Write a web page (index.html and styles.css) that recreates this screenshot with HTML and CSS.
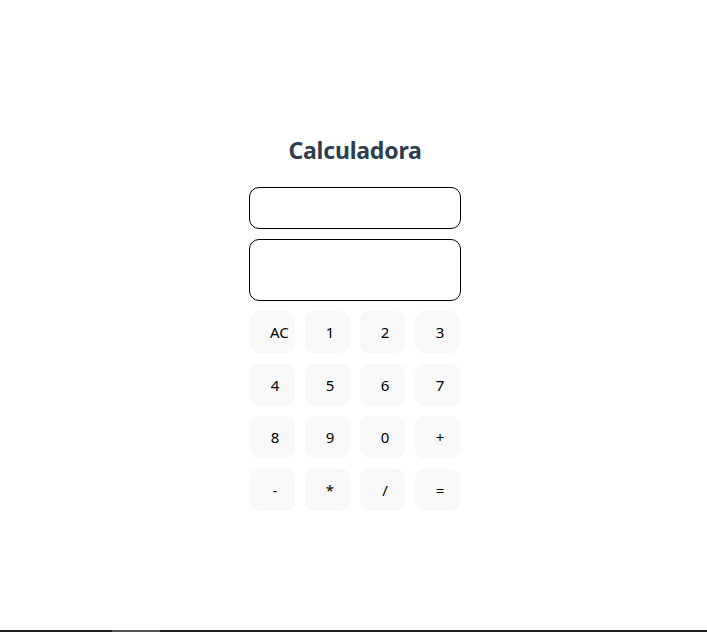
FILE: index.html
```html
<!DOCTYPE html>
<html lang="es">
<head>
<meta charset="utf-8">
<title>Calculadora</title>
<link rel="stylesheet" href="styles.css">
</head>
<body>
<div class="app">
  <h2 class="title">Calculadora</h2>
  <div class="calc">
    <input class="display expr" type="text">
    <div class="display result"></div>
    <div class="keys">
      <button class="key">AC</button>
      <button class="key">1</button>
      <button class="key">2</button>
      <button class="key">3</button>
      <button class="key">4</button>
      <button class="key">5</button>
      <button class="key">6</button>
      <button class="key">7</button>
      <button class="key">8</button>
      <button class="key">9</button>
      <button class="key">0</button>
      <button class="key">+</button>
      <button class="key">-</button>
      <button class="key">*</button>
      <button class="key">/</button>
      <button class="key">=</button>
    </div>
  </div>
</div>
<div class="bottom-bar"><span class="thumb"></span></div>
</body>
</html>
```
FILE: styles.css
```css
html, body {
  margin: 0;
  padding: 0;
  background: #fff;
}
.app {
  font-family: "Noto Sans", "Open Sans", sans-serif;
  text-align: center;
  padding-top: 134px;
  padding-left: 3px;
  display: flex;
  flex-direction: column;
  align-items: center;
}
.title {
  margin: 0 0 21px 0;
  font-size: 23px;
  font-weight: 700;
  color: #2c3e50;
  line-height: 32px;
  letter-spacing: -0.2px;
}
.calc {
  width: 212px;
  display: flex;
  flex-direction: column;
  gap: 10px;
}
.display {
  box-sizing: border-box;
  width: 212px;
  border: 1px solid #000;
  border-radius: 10px;
  background: #fff;
  margin: 0;
  padding: 0 10px;
  font: inherit;
}
.expr {
  height: 42px;
  display: block;
}
.result {
  height: 62px;
}
.keys {
  display: grid;
  grid-template-columns: repeat(4, 45px);
  column-gap: 10px;
  row-gap: 10.5px;
  padding-left: 1px;
}
.key {
  box-sizing: border-box;
  width: 45px;
  height: 42px;
  border: none;
  border-radius: 9px;
  background: #f8f8f8;
  color: #000;
  font-family: "Noto Sans", "Open Sans", sans-serif;
  font-size: 15px;
  padding: 0 15px 0 20px;
  text-align: center;
  overflow: visible;
  white-space: nowrap;
}
.bottom-bar {
  position: fixed;
  left: 0;
  right: 0;
  bottom: 0;
  height: 2px;
  background: #1e1e1e;
}
.thumb {
  position: absolute;
  left: 112px;
  width: 48px;
  top: 0;
  height: 2px;
  background: #555;
}
```
